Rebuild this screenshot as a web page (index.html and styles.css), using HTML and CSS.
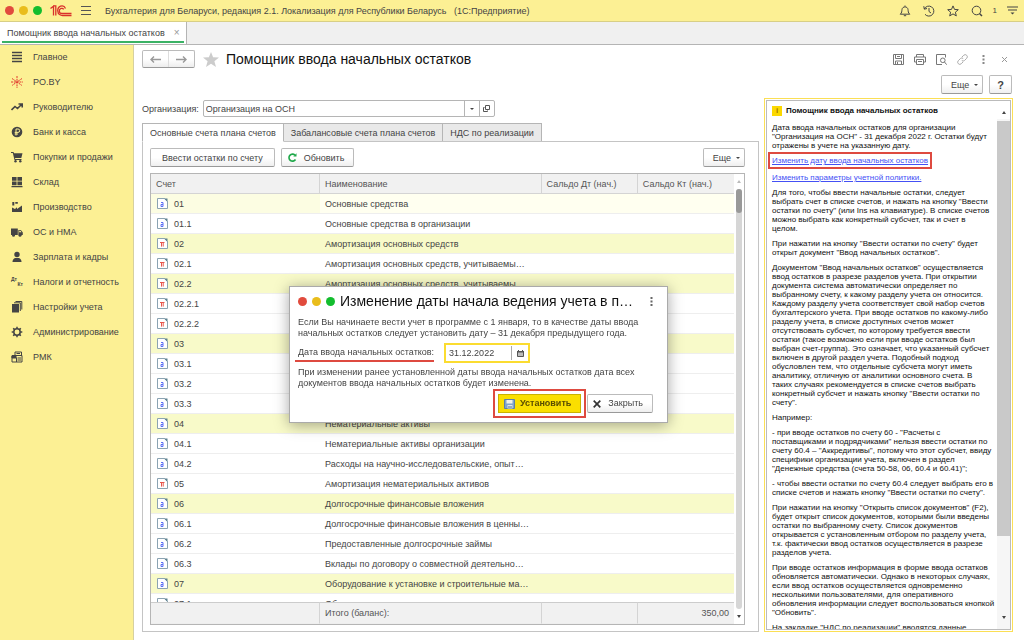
FILE: index.html
```html
<!DOCTYPE html>
<html lang="ru">
<head>
<meta charset="utf-8">
<title>Помощник ввода начальных остатков</title>
<link rel="stylesheet" href="styles.css">
</head>
<body>
<svg class="defs" aria-hidden="true">
  <symbol id="doc-a" viewBox="0 0 11 11"><path d="M.5.5H7.5L10.500 3.500V10.500H.5Z" fill="#fff" stroke="#8ba3b2"/><path d="M7 .5h3.500V4Z" fill="#5f8290"/><path d="M4 4.500h2v4H4V6.500H6" fill="none" stroke="#5c70f5"/></symbol>
  <symbol id="doc-p" viewBox="0 0 11 11"><path d="M.5.5H7.500L10.500 3.500V10.500H.5Z" fill="#fff" stroke="#8ba3b2"/><path d="M7 .5h3.500V4Z" fill="#5f8290"/><path d="M3 4.500h4.500M4.500 4.600v4M6.200 4.600v4" fill="none" stroke="#e8564c"/></symbol>
</svg>

<header class="topbar">
  <span class="dot red"></span><span class="dot yellow"></span><span class="dot green"></span>
  <svg class="logo" width="22" height="12" viewBox="0 0 22 12" fill="none" stroke="#d9302c" stroke-width="1.300"><path d="M.5 3.500 3.500 1.200V10.500M3 .8H5.800V10.500"/><path d="M15.500 3.500C14.500 1 12 .7 10.500 1.200 7 2.300 6.800 8 10 9.800c.8.600 1.500.7 2.500.7H21.500"/><path d="M13.700 4.300C12.500 2.500 9.300 3.300 9.300 6c0 1.700 1.200 2.500 2.700 2.500h9.500"/></svg>
  <button class="icon-btn menu" aria-label="Меню"><svg width="10" height="9" viewBox="0 0 10 9" stroke="#555"><path d="M0 .5h10M0 4.500h10M0 8.500h10"/></svg></button>
  <span class="app-title">Бухгалтерия для Беларуси, редакция 2.1. Локализация для Республики Беларусь &nbsp; (1С:Предприятие)</span>
  <div class="top-icons">
    <button class="icon-btn" aria-label="Уведомления"><svg width="12" height="12" viewBox="0 0 12 12" fill="none" stroke="#444"><path d="M6 .5v1M1.200 9.200C3 8 2.700 6 3 4.500c.4-3.500 5.600-3.500 6 0 .3 1.500 0 3.500 1.800 4.700Z"/><path d="M4.800 10.700h2.400"/></svg></button>
    <button class="icon-btn" aria-label="История"><svg width="12" height="12" viewBox="0 0 12 12" fill="none" stroke="#444"><path d="M1.300 4A5 5 0 1 1 2 9.300M.8 1.200 1.300 4.200 4 3.500M6 3v3.500L8 8"/></svg></button>
    <button class="icon-btn" aria-label="Избранное"><svg width="12" height="12" viewBox="0 0 12 12" fill="none" stroke="#444"><path d="m6 .9 1.500 3.500 3.800.3-2.900 2.500.9 3.700L6 8.900l-3.300 2 .9-3.700L.7 4.700l3.800-.3Z"/></svg></button>
    <button class="icon-btn" aria-label="Поиск"><svg width="12" height="12" viewBox="0 0 12 12" fill="none" stroke="#444"><circle cx="5.500" cy="5.500" r="4.300"/><path d="m8.500 8.500 2.500 2.500" stroke-width="1.500"/></svg></button>
    <span class="count">1</span>
    <button class="icon-btn" aria-label="Настройки панели"><svg width="11" height="9" viewBox="0 0 11 9" stroke="#444"><path d="M0 1h11M1 4h9"/><path d="M3.500 6.500h4l-2 2Z" fill="#444" stroke="none"/></svg></button>
  </div>
</header>

<nav class="windows" aria-label="Открытые окна">
  <div class="window-tab"><a href="#">Помощник ввода начальных остатков</a><button class="icon-btn tab-close" aria-label="Закрыть вкладку">×</button></div>
</nav>

<main class="main">
  <nav class="sidebar">
    <a href="#"><svg viewBox="0 0 12 12" stroke="#444"><path d="M1 1.500h10M1 4.500h10M1 7.500h10M1 10.500h10" stroke-width="1.300"/></svg>Главное</a>
    <a href="#"><svg viewBox="0 0 12 12" stroke="#e23b2e" fill="none"><path d="M6 0v12M1 2.500l10 7M11 2.500l-10 7M0 6h12" stroke-dasharray="2 .8"/></svg>PO.BY</a>
    <a href="#"><svg viewBox="0 0 12 12" fill="none" stroke="#444"><path d="m.5 9 3.500-3.500 2.500 2L10.500 3.500M7.500 3h3.700v3.500" stroke-width="1.600"/></svg>Руководителю</a>
    <a href="#"><svg viewBox="0 0 12 12"><circle cx="6" cy="6" r="5.300" fill="#444"/><path d="M5 9.500V3h2a1.700 1.700 0 0 1 0 3.400H3.700M3.700 8H7" fill="none" stroke="#fcf094" stroke-width="1"/></svg>Банк и касса</a>
    <a href="#"><svg viewBox="0 0 12 12" fill="#444"><path d="M0 1h2.500l.5 1.300h8.500L10.300 7H4l.3 1H10.500v1H3.500L1.800 2H0Z"/><circle cx="4.500" cy="10.300" r="1.200"/><circle cx="9.300" cy="10.300" r="1.200"/></svg>Покупки и продажи</a>
    <a href="#"><svg viewBox="0 0 12 12" fill="#444"><path d="M1 1h4.600v3.800H1ZM6.400 1H11v3.800H6.400ZM1 5.600h4.600v3.600H1ZM6.400 5.600H11v3.600H6.400ZM.5 10h11v1.300H.5Z"/></svg>Склад</a>
    <a href="#"><svg viewBox="0 0 12 12" fill="#444"><path d="M1 11V6.500l3 1.500 2-1.800V8l5-3.500V11ZM1.300 1h2v3.500h-2ZM4.300 1h2.500v1.800H4.300Z"/></svg>Производство</a>
    <a href="#"><svg viewBox="0 0 12 12" fill="#444"><path d="M0 2.500h6.800V9H0ZM7.400 4h2.500L11.800 6.500V9H7.400Z"/><circle cx="2.500" cy="9.300" r="1.500"/><circle cx="9" cy="9.300" r="1.500"/><path d="M8.200 4.800h1.300l1 1.500H8.200Z" fill="#fcf094"/></svg>ОС и НМА</a>
    <a href="#"><svg viewBox="0 0 12 12" fill="#444"><circle cx="6" cy="3.500" r="2.700"/><path d="M1.500 11c0-3 2-3.800 3-4h3c1 .2 3 1 3 4Z"/></svg>Зарплата и кадры</a>
    <a href="#"><span class="dtkt" aria-hidden="true"><i>Дт</i><i>Кт</i></span>Налоги и отчетность</a>
    <a href="#"><svg viewBox="0 0 12 12" fill="#444"><path d="M1 3h7v8.500H1Z"/><path d="M3 1.800h6.300V10M4.500.5h6.300v8" fill="none" stroke="#444"/></svg>Настройки учета</a>
    <a href="#"><svg viewBox="0 0 12 12" fill="none" stroke="#444"><circle cx="6" cy="6" r="3.200" stroke-width="1.500"/><path d="M6 .7v2M6 9.300v2M.7 6h2M9.300 6h2M2.200 2.200l1.400 1.400M8.400 8.400l1.400 1.400M9.800 2.200 8.400 3.600M3.600 8.400 2.200 9.800" stroke-width="1.500"/></svg>Администрирование</a>
    <a href="#"><svg viewBox="0 0 12 12" fill="none" stroke="#444"><path d="M1 4.500h10v6.500H1ZM4 4.500v-3.500h6.500v3.500M5.500 2.500H9M5.500 6.500v4.500M6.500 7H10M6.500 9H10"/><path d="M1 5h4v2H1Z" fill="#444"/></svg>РМК</a>
  </nav>

  <section class="content">
    <div class="title-row">
      <div class="nav-buttons">
        <button aria-label="Назад"><svg width="11" height="7" viewBox="0 0 11 7" fill="none" stroke="#999" stroke-width="1.400"><path d="M11 3.500H1M4 .5l-3 3 3 3"/></svg></button><button aria-label="Вперед"><svg width="11" height="7" viewBox="0 0 11 7" fill="none" stroke="#999" stroke-width="1.400"><path d="M0 3.500h10M7 .5l3 3-3 3"/></svg></button>
      </div>
      <svg class="fav" width="16" height="15" viewBox="0 0 16 15" fill="#ccc"><path d="m8 0 2.100 5.300 5.900.2-4.600 3.700L13 15 8 11.700 3 15l1.600-5.800L0 5.500l5.900-.2Z"/></svg>
      <h1>Помощник ввода начальных остатков</h1>
      <div class="form-icons">
        <button class="icon-btn" aria-label="Сохранить"><svg width="11" height="11" viewBox="0 0 11 11" fill="none" stroke="#777"><path d="M.5.5h10v10H.5ZM2.500.5v4h6v-4M2.500 10.500v-3.500h6v3.500M4.500 8v2.500M4 2.500h3"/></svg></button>
        <button class="icon-btn" aria-label="Печать"><svg width="12" height="11" viewBox="0 0 12 11" fill="none" stroke="#777"><path d="M2.500 3V.5h7V3M2.500 8H.5V3h11v5h-2M2.500 5.500h7v5h-7ZM4 7.500h4"/></svg></button>
        <button class="icon-btn" aria-label="Просмотр"><svg width="11" height="11" viewBox="0 0 11 11" fill="none" stroke="#777"><path d="M9.500 3.500V.5h-9v10H6"/><circle cx="6.800" cy="6.300" r="2.300"/><path d="m8.500 8 2.200 2.700"/></svg></button>
        <button class="icon-btn" aria-label="Ссылка"><svg width="11" height="11" viewBox="0 0 11 11" fill="none" stroke="#aaa"><path d="m5 3 1.700-1.700a2 2 0 0 1 3 3L7.500 6.500a2 2 0 0 1-2.700 0M6 8 4.300 9.700a2 2 0 0 1-3-3L3.500 4.500a2 2 0 0 1 2.700 0"/></svg></button>
        <button class="icon-btn" aria-label="Другие действия"><svg width="3" height="9" viewBox="0 0 3 9" fill="#888"><path d="M.5 0h2v2h-2ZM.5 3.500h2v2h-2ZM.5 7h2v2h-2Z"/></svg></button>
        <button class="icon-btn" aria-label="Закрыть форму"><svg width="5" height="5" viewBox="0 0 5 5" stroke="#999"><path d="m0 0 5 5M5 0 0 5"/></svg></button>
      </div>
    </div>

    <div class="command-row">
      <button class="btn more">Еще<span class="caret"></span></button>
      <button class="btn help-btn">?</button>
    </div>

    <div class="columns">
      <div class="form">
        <div class="org-row">
          <label for="org">Организация:</label>
          <div class="combo"><input id="org" type="text" value="Организация на ОСН"><button aria-label="Выбрать"><span class="caret"></span></button><button aria-label="Открыть"><svg width="7" height="7" viewBox="0 0 7 7" fill="none" stroke="#555"><path d="M2.500.5h4v4h-4ZM1.500 2.500h-1v4h4v-1"/></svg></button></div>
        </div>
        <div class="tabs" role="tablist">
          <button class="active" role="tab" aria-selected="true">Основные счета плана счетов</button>
          <button role="tab">Забалансовые счета плана счетов</button>
          <button role="tab">НДС по реализации</button>
        </div>
        <div class="pane">
          <div class="pane-tools">
            <button class="btn enter">Ввести остатки по счету</button>
            <button class="btn refresh"><svg width="9" height="9" viewBox="0 0 9 9" fill="none" stroke="#1fa84a" stroke-width="1.600"><path d="M7.500 6.500A3.500 3.500 0 1 1 7 2.200"/><path d="M5.300 3.500H8.500V.3Z" fill="#1fa84a" stroke="none"/></svg>Обновить</button>
            <button class="btn more push">Еще<span class="caret"></span></button>
          </div>
          <div class="grid-box">
            <div class="grid-scroll">
              <table class="accounts">
                <colgroup><col class="c-code"><col class="c-name"><col class="c-sum"><col class="c-sum"></colgroup>
                <thead><tr><th>Счет</th><th>Наименование</th><th>Сальдо Дт (нач.)</th><th>Сальдо Кт (нач.)</th></tr></thead>
                <tbody>
                  <tr class="current"><td><svg><use href="#doc-a"/></svg>01</td><td>Основные средства</td><td></td><td></td></tr>
                  <tr><td><svg><use href="#doc-a"/></svg>01.1</td><td>Основные средства в организации</td><td></td><td></td></tr>
                  <tr class="group"><td><svg><use href="#doc-p"/></svg>02</td><td>Амортизация основных средств</td><td></td><td></td></tr>
                  <tr><td><svg><use href="#doc-p"/></svg>02.1</td><td>Амортизация основных средств, учитываемы…</td><td></td><td></td></tr>
                  <tr class="group"><td><svg><use href="#doc-p"/></svg>02.2</td><td>Амортизация основных средств, учитываемы…</td><td></td><td></td></tr>
                  <tr><td><svg><use href="#doc-p"/></svg>02.2.1</td><td></td><td></td><td></td></tr>
                  <tr><td><svg><use href="#doc-p"/></svg>02.2.2</td><td></td><td></td><td></td></tr>
                  <tr class="group"><td><svg><use href="#doc-a"/></svg>03</td><td></td><td></td><td></td></tr>
                  <tr><td><svg><use href="#doc-a"/></svg>03.1</td><td></td><td></td><td></td></tr>
                  <tr><td><svg><use href="#doc-a"/></svg>03.2</td><td></td><td></td><td></td></tr>
                  <tr><td><svg><use href="#doc-a"/></svg>03.3</td><td></td><td></td><td></td></tr>
                  <tr class="group"><td><svg><use href="#doc-a"/></svg>04</td><td>Нематериальные активы</td><td></td><td></td></tr>
                  <tr><td><svg><use href="#doc-a"/></svg>04.1</td><td>Нематериальные активы организации</td><td></td><td></td></tr>
                  <tr><td><svg><use href="#doc-a"/></svg>04.2</td><td>Расходы на научно-исследовательские, опыт…</td><td></td><td></td></tr>
                  <tr><td><svg><use href="#doc-p"/></svg>05</td><td>Амортизация нематериальных активов</td><td></td><td></td></tr>
                  <tr class="group"><td><svg><use href="#doc-a"/></svg>06</td><td>Долгосрочные финансовые вложения</td><td></td><td></td></tr>
                  <tr><td><svg><use href="#doc-a"/></svg>06.1</td><td>Долгосрочные финансовые вложения в ценны…</td><td></td><td></td></tr>
                  <tr><td><svg><use href="#doc-a"/></svg>06.2</td><td>Предоставленные долгосрочные займы</td><td></td><td></td></tr>
                  <tr><td><svg><use href="#doc-a"/></svg>06.3</td><td>Вклады по договору о совместной деятельно…</td><td></td><td></td></tr>
                  <tr class="group"><td><svg><use href="#doc-a"/></svg>07</td><td>Оборудование к установке и строительные ма…</td><td></td><td></td></tr>
                  <tr><td><svg><use href="#doc-a"/></svg>07.1</td><td>Оборудование к установке на складе</td><td></td><td></td></tr>
                </tbody>
                <tfoot><tr><td></td><td>Итого (баланс):</td><td></td><td class="num">350,00</td></tr></tfoot>
              </table>
            </div>
            <div class="bar"><span class="tri up faint"></span><div class="bar-track"><div class="bar-thumb"></div></div><span class="tri down"></span></div>
          </div>
        </div>
      </div>

      <aside class="help">
        <div class="help-frame">
          <div class="help-text">
            <h2><span class="info">i</span>Помощник ввода начальных остатков</h2>
            <p>Дата ввода начальных остатков для организации<br>"Организация на ОСН" - 31 декабря 2022 г. Остатки будут<br>отражены в учете на указанную дату.</p>
            <p class="link-line"><a class="marked" href="#">Изменить дату ввода начальных остатков</a></p>
            <p><a href="#">Изменить параметры учетной политики.</a></p>
            <p>Для того, чтобы ввести начальные остатки, следует<br>выбрать счет в списке счетов, и нажать на кнопку "Ввести<br>остатки по счету" (или Ins на клавиатуре). В списке счетов<br>можно выбрать как конкретный субсчет, так и счет в<br>целом.</p>
            <p>При нажатии на кнопку "Ввести остатки по счету" будет<br>открыт документ "Ввод начальных остатков".</p>
            <p>Документом "Ввод начальных остатков" осуществляется<br>ввод остатков в разрезе разделов учета. При открытии<br>документа система автоматически определяет по<br>выбранному счету, к какому разделу учета он относится.<br>Каждому разделу учета соответствует свой набор счетов<br>бухгалтерского учета. При вводе остатков по какому-либо<br>разделу учета, в списке доступных счетов может<br>отсутствовать субсчет, по которому требуется ввести<br>остатки (такое возможно если при вводе остатков был<br>выбран счет-группа). Это означает, что указанный субсчет<br>включен в другой раздел учета. Подобный подход<br>обусловлен тем, что отдельные субсчета могут иметь<br>аналитику, отличную от аналитики основного счета. В<br>таких случаях рекомендуется в списке счетов выбрать<br>конкретный субсчет и нажать кнопку "Ввести остатки по<br>счету".</p>
            <p>Например:</p>
            <p>- при вводе остатков по счету 60 - "Расчеты с<br>поставщиками и подрядчиками" нельзя ввести остатки по<br>счету 60.4 – "Аккредитивы", потому что этот субсчет, ввиду<br>специфики организации учета, включен в раздел<br>"Денежные средства (счета 50-58, 06, 60.4 и 60.41)";</p>
            <p>- чтобы ввести остатки по счету 60.4 следует выбрать его в<br>списке счетов и нажать кнопку "Ввести остатки по счету".</p>
            <p>При нажатии на кнопку "Открыть список документов" (F2),<br>будет открыт список документов, которыми были введены<br>остатки по выбранному счету. Список документов<br>открывается с установленным отбором по разделу учета,<br>т.к. фактически ввод остатков осуществляется в разрезе<br>разделов учета.</p>
            <p>При вводе остатков информация в форме ввода остатков<br>обновляется автоматически. Однако в некоторых случаях,<br>если ввод остатков осуществляется одновременно<br>несколькими пользователями, для оперативного<br>обновления информации следует воспользоваться кнопкой<br>"Обновить".</p>
            <p>На закладке "НДС по реализации" вводятся данные</p>
          </div>
          <div class="help-bar"><span class="tri up"></span><div class="help-track"><div class="help-thumb"></div></div><span class="tri down"></span></div>
        </div>
      </aside>
    </div>
  </section>
</main>

<section class="dialog" role="dialog" aria-labelledby="dlg-title">
  <div class="dialog-head">
    <span class="dot red"></span><span class="dot yellow"></span><span class="dot green"></span>
    <h2 id="dlg-title">Изменение даты начала ведения учета в п…</h2>
    <button class="icon-btn" aria-label="Другие действия"><svg width="3" height="9" viewBox="0 0 3 9" fill="#666"><path d="M.5 0h2v2h-2ZM.5 3.500h2v2h-2ZM.5 7h2v2h-2Z"/></svg></button>
  </div>
  <p>Если Вы начинаете вести учет в программе с 1 января, то в качестве даты ввода<br>начальных остатков следует установить дату – 31 декабря предыдущего года.</p>
  <div class="date-row">
    <label for="date">Дата ввода начальных остатков:</label>
    <div class="date-field"><input id="date" type="text" value="31.12.2022"><button aria-label="Календарь"><svg width="7" height="7" viewBox="0 0 7 7"><path d="M.5 1.500h6v5h-6Z" fill="#bbb" stroke="#555"/><path d="M0 1h7v1.500H0ZM1 0h1v1h-1ZM5 0h1v1h-1Z" fill="#555"/></svg></button></div>
  </div>
  <p>При изменении ранее установленной даты ввода начальных остатков дата всех<br>документов ввода начальных остатков будет изменена.</p>
  <div class="dialog-actions">
    <button class="btn primary"><svg width="11" height="10" viewBox="0 0 11 10"><path d="M.5.5h10v9H.5Z" fill="#7fa3cc" stroke="#5d7fa8"/><path d="M2.500 1h6v3.500h-6Z" fill="#f2f2ea"/><path d="M3.500 6h5v3.500h-5Z" fill="#dfe5ec"/><path d="M4.500 7h1v2h-1ZM6.500 7h1v2h-1Z" fill="#56708e"/></svg>Установить</button>
    <button class="btn close"><svg width="8" height="8" viewBox="0 0 8 8" stroke="#333" stroke-width="1.700"><path d="m.7.700 6.600 6.600M7.300.7.700 7.300"/></svg>Закрыть</button>
  </div>
</section>
</body>
</html>
```
FILE: styles.css
```css
* { box-sizing: border-box; }

body {
  margin: 0;
  height: 100vh;
  display: flex;
  flex-direction: column;
  overflow: hidden;
  position: relative;
  background: #fff;
  color: #444;
  font: 9px/12px "Liberation Sans", Arial, sans-serif;
}

button, input { font: inherit; color: inherit; margin: 0; }
h1, h2, p { margin: 0; font-weight: normal; }
a { color: inherit; text-decoration: none; }
svg { flex: none; }
.defs { position: absolute; width: 0; height: 0; }

.icon-btn {
  display: flex;
  align-items: center;
  justify-content: center;
  border: 0;
  padding: 0;
  background: none;
}

.dot { width: 9px; height: 9px; border-radius: 50%; flex: none; }
.dot.red { background: #e14b3d; }
.dot.yellow { background: #e9bd1c; }
.dot.green { background: #13bd2e; }

/* top bar */
.topbar {
  flex: none;
  display: flex;
  align-items: center;
  gap: 5px;
  height: 22px;
  padding: 0 6px 0 5px;
  background: #fcf094;
  border-bottom: 1px solid #d8cf86;
}
.logo { margin-left: 3px; }
.menu { margin-left: 4px; }
.app-title { margin-left: 9px; white-space: nowrap; }
.top-icons { display: flex; align-items: center; gap: 12px; margin-left: auto; }
.count { font-size: 8px; margin: 0 -2px; }

/* open windows */
.windows {
  flex: none;
  display: flex;
  height: 23px;
  background: #f0f0f0;
  border-bottom: 1px solid #b4b4b4;
}
.window-tab {
  display: flex;
  align-items: center;
  gap: 9px;
  padding: 0 6px 0 7px;
  background: linear-gradient(#3bb265, #3bb265) 2px 19px / calc(100% - 4px) 2px no-repeat #fff;
  border-right: 1px solid #b4b4b4;
  white-space: nowrap;
}
.tab-close { color: #999; font-size: 10px; }

.main { flex: 1; display: flex; min-height: 0; }

/* sections */
.sidebar {
  flex: none;
  width: 134px;
  background: #fcf094;
  border-right: 1px solid #d6d0a0;
}
.sidebar a {
  display: flex;
  align-items: center;
  gap: 10px;
  height: 25px;
  padding: 0 0 2px 11px;
  white-space: nowrap;
}
.sidebar svg { width: 12px; height: 12px; }
.dtkt { width: 12px; font: bold 5px/5px "Liberation Sans", Arial, sans-serif; }
.dtkt i { display: block; font-style: normal; }
.dtkt i + i { text-align: right; }

/* form */
.content {
  flex: 1;
  min-width: 0;
  display: flex;
  flex-direction: column;
  padding: 5px 11px 8px 8px;
}
.title-row { display: flex; align-items: center; height: 18px; }
.nav-buttons {
  display: flex;
  width: 53px;
  height: 18px;
  border: 1px solid #bbb;
  border-bottom-color: #999;
  border-radius: 2px;
  background: linear-gradient(#fff 50%, #ededed);
}
.nav-buttons button {
  flex: 1;
  display: flex;
  align-items: center;
  justify-content: center;
  border: 0;
  padding: 0;
  background: none;
}
.nav-buttons button + button { border-left: 1px solid #ddd; }
.fav { margin: 0 7px 0 8px; }
h1 { font-size: 14px; line-height: 18px; color: #111; }
.form-icons { display: flex; align-items: center; gap: 10px; margin: 0 3px 0 auto; }
.form-icons .icon-btn { min-width: 11px; }

.btn {
  display: inline-flex;
  align-items: center;
  justify-content: center;
  height: 19px;
  padding: 0 9px;
  border: 1px solid #bbb;
  border-bottom-color: #999;
  border-radius: 2px;
  background: linear-gradient(#fff 50%, #efefef);
  white-space: nowrap;
}
.caret {
  width: 0;
  border: 2px solid transparent;
  border-top-color: #444;
  border-bottom: 0;
}
.more { gap: 5px; padding: 0 4px 0 9px; }

.command-row { display: flex; justify-content: flex-end; gap: 6px; margin: 7px 1px 4px 0; }
.help-btn { font-weight: bold; font-size: 11px; padding: 0 7px; }

.columns {
  flex: 1;
  min-height: 0;
  display: grid;
  grid-template-columns: minmax(0, 1fr) 249px;
  gap: 5px;
}
.form { display: flex; flex-direction: column; min-height: 0; padding-top: 2px; }
.org-row { display: flex; align-items: center; gap: 4px; }
.combo {
  display: flex;
  width: 292px;
  height: 17px;
  border: 1px solid #b5b5b5;
  border-radius: 2px;
}
.combo input { flex: 1; min-width: 0; border: 0; padding: 0 2px; background: none; }
.combo button {
  display: flex;
  align-items: center;
  justify-content: center;
  width: 15px;
  padding: 0;
  border: 0;
  border-left: 1px solid #b5b5b5;
  background: none;
}

.tabs { display: flex; margin-top: 6px; }
.tabs button {
  height: 19px;
  margin-bottom: -1px;
  padding: 0 7px;
  border: 1px solid #b5b5b5;
  border-left: 0;
  background: #e9e9e9;
  white-space: nowrap;
}
.tabs .active {
  position: relative;
  border-left: 1px solid #b5b5b5;
  border-bottom-color: #fff;
  background: #fff;
}

.pane {
  flex: 1;
  min-height: 0;
  display: flex;
  flex-direction: column;
  padding: 6px 13px 6px 7px;
  border: 1px solid #c4c4c4;
}
.pane-tools { display: flex; gap: 6px; }
.enter { padding: 0 11px; }
.refresh { gap: 7px; padding: 0 9px 0 6px; }
.push { margin-left: auto; }

.grid-box {
  flex: 1;
  min-height: 0;
  display: flex;
  margin-top: 6px;
  border: 1px solid #b5b5b5;
}
.grid-scroll { flex: 1; min-width: 0; overflow: hidden; }
.accounts {
  width: 100%;
  table-layout: fixed;
  border-collapse: separate;
  border-spacing: 0;
}
.c-code { width: 29%; }
.c-name { width: 38%; }
.accounts th {
  height: 20px;
  padding: 0 5px;
  text-align: left;
  font-weight: normal;
  color: #555;
  background: #f1f1f1;
  border-right: 1px solid #d4d4d4;
  border-bottom: 1px solid #d4d4d4;
}
.accounts td {
  height: 20px;
  padding: 0 5px;
  white-space: nowrap;
  overflow: hidden;
  border-bottom: 1px solid #eee;
}
.accounts td svg { width: 11px; height: 11px; margin: 0 6px 0 1px; vertical-align: -2px; }
.accounts .group td { background: #f8fac9; }
.accounts .current td { background: #fffff0; }
.accounts .current td:first-child { background: #fcfde2; }
.accounts tfoot td {
  position: sticky;
  bottom: 0;
  height: 22px;
  color: #555;
  background: #f1f1f1;
  border-top: 1px solid #ccc;
  border-right: 1px solid #d4d4d4;
}
.accounts th:last-child, .accounts tfoot td:last-child { border-right: 0; }
.accounts .num { text-align: right; }

.tri { width: 0; border: 2px solid transparent; flex: none; }
.tri.up { border-bottom: 3px solid #444; border-top: 0; }
.tri.down { border-top: 3px solid #444; border-bottom: 0; }
.tri.faint { border-bottom-color: #bbb; }
.bar {
  width: 10px;
  display: flex;
  flex-direction: column;
  align-items: center;
  gap: 6px;
  padding: 6px 0;
}
.bar-track { flex: 1; width: 6px; border-radius: 3px; background: #d6d6d6; }
.bar-thumb { height: 24px; border-radius: 3px; background: #999; }

/* help */
.help {
  min-height: 0;
  display: flex;
  padding: 1px;
  border: 1px solid #fbdf55;
}
.help-frame { flex: 1; min-width: 0; display: flex; border: 1px solid #bbb; }
.help-text {
  flex: 1;
  min-width: 0;
  overflow: hidden;
  padding: 4px 0 0 5px;
  color: #111;
  font-size: 8px;
  line-height: 9px;
  white-space: nowrap;
}
.help-text h2 {
  display: flex;
  align-items: center;
  gap: 4px;
  margin-bottom: 7px;
  font-size: 8px;
  line-height: 11px;
  font-weight: bold;
}
.info {
  width: 10px;
  height: 10px;
  line-height: 10px;
  text-align: center;
  color: #a07800;
  background: #fbd800;
}
.help-text p { margin-bottom: 6px; }
.help-text a { color: #4450f5; text-decoration: underline; }
.help-text .link-line { margin-bottom: 8px; }
.marked { outline: 2px solid #de4a40; outline-offset: 2px; }
.help-bar {
  width: 13px;
  display: flex;
  flex-direction: column;
  align-items: center;
  gap: 7px;
  padding: 10px 0;
  background: linear-gradient(#fff 18px, #f6f6f6 18px);
}
.help-track { flex: 1; width: 100%; }
.help-thumb { height: 85%; background: #c9c9c9; }

/* dialog window */
.dialog {
  position: absolute;
  left: 289px;
  top: 286px;
  width: 379px;
  padding: 6px 14px 9px 8px;
  background: #fff;
  border: 1px solid #aaa;
  box-shadow: 0 2px 14px rgba(0, 0, 0, .35);
  line-height: 11px;
}
.dialog-head { display: flex; align-items: center; gap: 5px; margin-bottom: 8px; }
.dialog-head h2 { flex: 1; font-size: 14px; line-height: 16px; color: #111; white-space: nowrap; }
.dialog-head .icon-btn { width: 3px; }
.dialog p { white-space: nowrap; }
.date-row { display: flex; align-items: center; gap: 10px; margin: 4px 0; }
.date-row label {
  margin-left: -3px;
  padding: 3px 0 2px 3px;
  border-bottom: 2px solid #de4a40;
  white-space: nowrap;
}
.date-field { display: flex; width: 86px; height: 20px; border: 2px solid #fbdc30; }
.date-field input { flex: 1; min-width: 0; border: 0; padding: 0 3px; background: none; }
.date-field button {
  display: flex;
  align-items: center;
  justify-content: center;
  width: 17px;
  margin: 1px 0;
  padding: 0;
  border: 0;
  border-left: 1px solid #aaa;
  background: none;
}
.dialog-actions { display: flex; justify-content: flex-end; gap: 6px; margin-top: 5px; }
.primary {
  gap: 5px;
  padding: 0 9px 0 5px;
  font-weight: bold;
  color: #5a4d00;
  background: #fadf00;
  border-color: #c9b200;
  border-radius: 0;
  outline: 2px solid #de4a40;
  outline-offset: 3px;
}
.close { gap: 7px; padding: 0 9px 0 5px; }
```
